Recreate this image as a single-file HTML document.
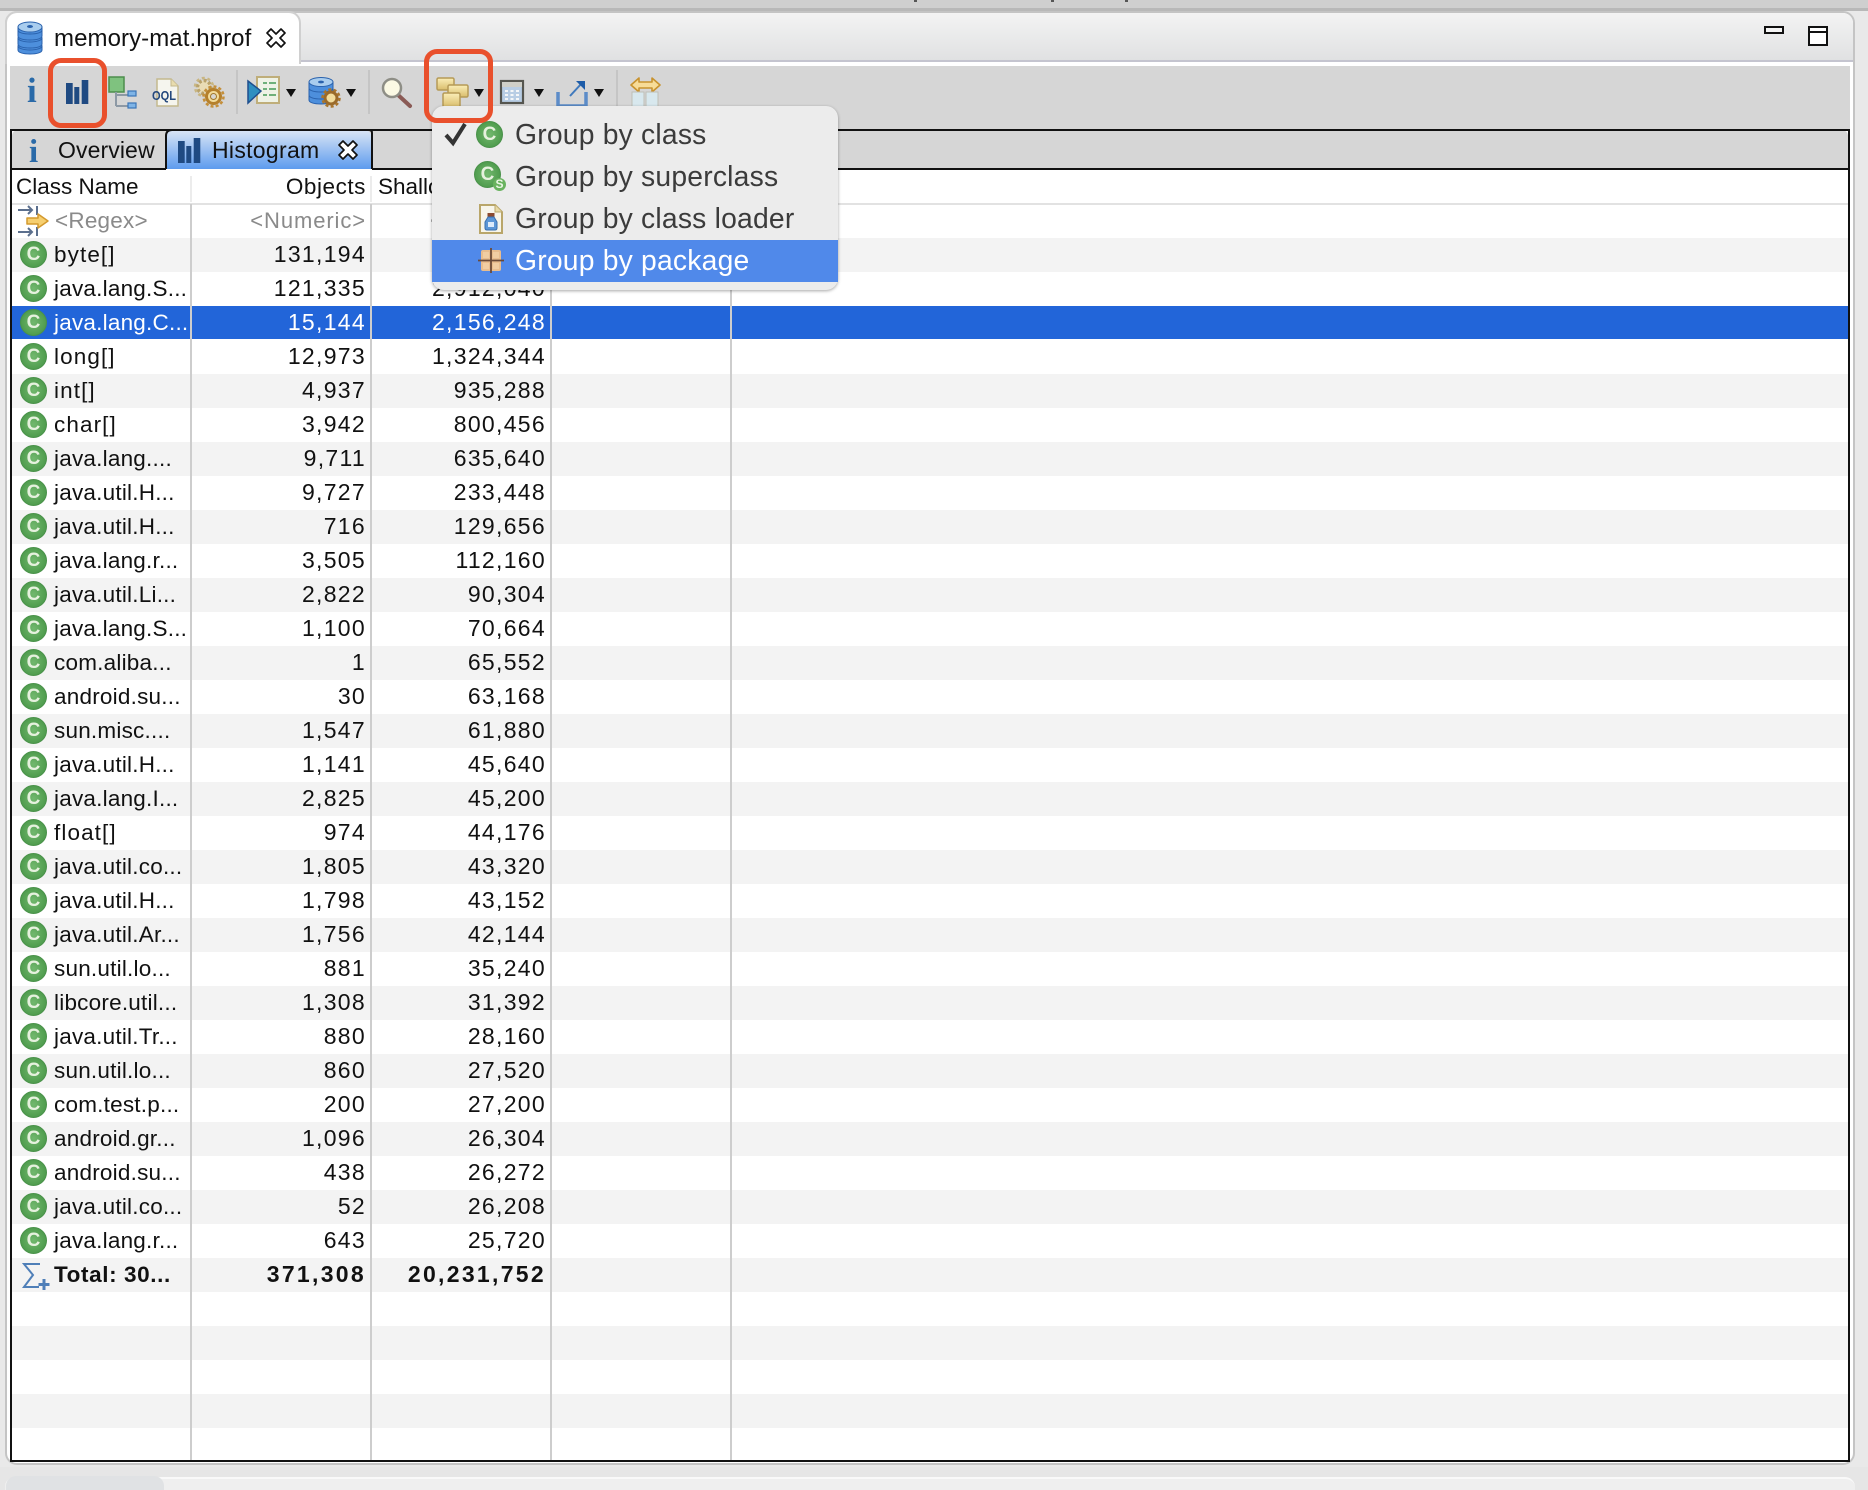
<!DOCTYPE html>
<html><head><meta charset="utf-8"><title>memory-mat.hprof</title>
<style>
html,body{margin:0;padding:0;background:#e9e9e9;}
#p{position:relative;width:1868px;height:1490px;overflow:hidden;background:#e9e9e9;font-family:"Liberation Sans",sans-serif;color:#111;filter:blur(.3px);}
.a{position:absolute;}
.r{position:absolute;left:11px;width:1838px;height:34px;line-height:33px;font-size:22.5px;white-space:nowrap;}
.r.e{background:#f3f3f3;}
.r.sel{background:#2265d9;color:#fff;height:33px;}
.n{position:absolute;left:43px;top:0;letter-spacing:.22px;}
.b{letter-spacing:1.1px;}
.o,.s{position:absolute;top:0;width:175px;text-align:right;letter-spacing:1.3px;font-size:23px;}
.o{left:180px;}
.s{left:360px;}
.t .o,.t .s{letter-spacing:2.3px;}
.c{position:absolute;left:9px;top:3px;width:25px;height:25px;border-radius:50%;background:radial-gradient(circle,#72b86e 0,#55a153 60%,#3f8f42 100%);border:.5px solid #4a924a;color:#e6f1de;font:bold 19px/25px "Liberation Sans",sans-serif;text-align:center;}
.vl{position:absolute;top:204px;height:1256px;width:2px;background:#cdcdcd;z-index:2;}
.caret{position:absolute;width:0;height:0;border-left:5.5px solid transparent;border-right:5.5px solid transparent;border-top:8px solid #111;}
.sep{position:absolute;top:70px;height:44px;width:2px;background:#c5c5c5;}
.red{position:absolute;border:5px solid #e9502c;border-radius:13px;box-sizing:border-box;z-index:20;}
.mi{position:absolute;left:515px;font-size:28.3px;line-height:42px;color:#3b3b3b;white-space:nowrap;z-index:11;letter-spacing:.2px;}
svg{position:absolute;overflow:visible;}
.tick{position:absolute;top:0;width:3px;height:2px;background:#555;}
</style></head><body><div id="p">

<!-- top band -->
<div class="a" style="left:0;top:0;width:1868px;height:9px;background:#cfcfcf;"></div>
<div class="a" style="left:0;top:8px;width:1868px;height:3px;background:#b8b8b8;"></div>
<div class="tick" style="left:914px;"></div><div class="tick" style="left:1051px;"></div><div class="tick" style="left:1125px;"></div>

<!-- main folder -->
<div class="a" style="left:5px;top:11px;width:1850px;height:1454px;box-sizing:border-box;border:2px solid #c4c4c4;border-radius:12px;background:#fff;"></div>
<div class="a" style="left:7px;top:13px;width:1846px;height:47px;background:linear-gradient(#f3f3f3,#e0e1e2);border-radius:10px 10px 0 0;"></div>
<div class="a" style="left:300px;top:60px;width:1553px;height:2px;background:#c4c4cf;"></div>
<!-- editor tab -->
<div class="a" style="left:5px;top:11px;width:296px;height:53px;box-sizing:border-box;border:2px solid #d0d0d0;border-bottom:none;border-radius:12px 12px 0 0;background:#fff;"></div>
<svg style="left:17px;top:21px" width="26" height="34" viewBox="0 0 26 34">
<g fill="#4d8fdc" stroke="#2a62ad" stroke-width="1"><path d="M1 25v4c0 2.500 5 4 12 4s12-1.500 12-4v-4z"/><ellipse cx="13" cy="25" rx="12" ry="4"/><path d="M1 17v6c0 2.500 5 4 12 4s12-1.500 12-4v-6z"/><ellipse cx="13" cy="17" rx="12" ry="4"/><path d="M1 9v6c0 2.500 5 4 12 4s12-1.500 12-4v-6z"/><path d="M1 6v3c0 2.500 5 4 12 4s12-1.500 12-4v-3z"/></g>
<ellipse cx="13" cy="6" rx="12" ry="5" fill="#a9cdee" stroke="#2a62ad"/><ellipse cx="13" cy="5.500" rx="3" ry="1.500" fill="#2a62ad"/></svg>
<div class="a" style="left:54px;top:23px;font-size:24px;line-height:32px;color:#111;white-space:nowrap;letter-spacing:.08px;">memory-mat.hprof</div>
<svg style="left:266px;top:28px" width="20" height="20" viewBox="0 0 20 20"><path d="M1 5 5 1l5 5 5-5 4 4-5 5 5 5-4 4-5-5-5 5-4-4 5-5z" fill="#fff" stroke="#111" stroke-width="1.700" stroke-linejoin="round"/></svg>
<!-- window buttons -->
<div class="a" style="left:1764px;top:26px;width:20px;height:8px;box-sizing:border-box;border:2px solid #111;background:#f4f4f4;"></div>
<div class="a" style="left:1808px;top:26px;width:20px;height:20px;box-sizing:border-box;border:2px solid #111;background:#fff;"><div style="height:3px;border-bottom:2px solid #111;"></div></div>

<!-- toolbar -->
<div class="a" style="left:10px;top:66px;width:1840px;height:64px;background:#d6d6d6;"></div>
<div class="a" style="left:27px;top:69px;font:bold 35px/44px 'Liberation Serif',serif;color:#2a6aa8;">i</div>
<svg style="left:66px;top:80px" width="23" height="25"><path d="M0 3h6.700v21H0zM8.300 7h5v17h-5zM15.700 0h6.600v24h-6.600z" fill="#1f4a82"/></svg>
<svg style="left:108px;top:76px" width="30" height="32"><rect x="1" y="1" width="15" height="15" fill="#7fc27f" stroke="#4d8d4d" stroke-width="1.500"/><path d="M8 16v14M8 19h12M8 30h12" stroke="#8d99a5" stroke-width="2" fill="none"/><rect x="20" y="15" width="8" height="5" fill="#7fb4e6" stroke="#3a75b8" stroke-width="1.200"/><rect x="20" y="27" width="8" height="5" fill="#7fb4e6" stroke="#3a75b8" stroke-width="1.200"/></svg>
<svg style="left:152px;top:78px" width="28" height="30"><path d="M5 1h14l7 7v20H5z" fill="#f5f5ee" stroke="#c4b98e" stroke-width="1.500"/><path d="M19 1v7h7" fill="#e8dcae" stroke="#c4b98e"/><text x="0" y="22" font-family="Liberation Sans" font-weight="bold" font-size="13" fill="#24487c" textLength="24" lengthAdjust="spacingAndGlyphs">OQL</text></svg>
<svg style="left:193px;top:76px" width="32" height="32"><circle cx="11" cy="11" r="6.500" fill="#e9dcb5" stroke="#b8a26c" stroke-width="3.500" stroke-dasharray="3 2"/><circle cx="11" cy="11" r="9" fill="none" stroke="#c9b682" stroke-width="2.500" stroke-dasharray="3 2.700"/><circle cx="20.500" cy="20.500" r="7" fill="#f2dc9c" stroke="#b5802c" stroke-width="3"/><circle cx="20.500" cy="20.500" r="10" fill="none" stroke="#c48f3a" stroke-width="2.500" stroke-dasharray="3 2.200"/><circle cx="20.500" cy="20.500" r="3" fill="#d8d6d0" stroke="#a0782e"/></svg>
<div class="sep" style="left:236px;"></div>
<svg style="left:247px;top:76px" width="34" height="30"><rect x="10" y="1" width="22" height="26" fill="#eef2e6" stroke="#bfae7a" stroke-width="2"/><path d="M16 7h4M22 7h7M16 13h4M22 13h7M16 19h4M22 19h7" stroke="#6fb07a" stroke-width="2"/><path d="M1 5 14 15 1 27z" fill="#2e8fc0" stroke="#1e4f8e" stroke-width="1.500"/></svg>
<div class="caret" style="left:286px;top:89px;"></div>
<svg style="left:308px;top:77px" width="34" height="31"><g fill="#4d8fdc" stroke="#2a62ad"><path d="M1 19v4c0 2.500 5 4 12 4s12-1.500 12-4v-4z"/><path d="M1 12v6c0 2.500 5 4 12 4s12-1.500 12-4v-6z"/><path d="M1 5v6c0 2.500 5 4 12 4s12-1.500 12-4V5z"/></g><ellipse cx="13" cy="5" rx="12" ry="4.500" fill="#a9cdee" stroke="#2a62ad"/><ellipse cx="13" cy="5" rx="3" ry="1.400" fill="#2a62ad"/><circle cx="23" cy="21" r="6" fill="#f2dc9c" stroke="#9a6a2a" stroke-width="3"/><circle cx="23" cy="21" r="8.500" fill="none" stroke="#a9752c" stroke-width="2.500" stroke-dasharray="3 2.300"/></svg>
<div class="caret" style="left:346px;top:89px;"></div>
<div class="sep" style="left:368px;"></div>
<svg style="left:381px;top:78px" width="31" height="30"><path d="M16 16 29 28" stroke="#8a5a55" stroke-width="4" stroke-linecap="round"/><circle cx="11" cy="10" r="9" fill="#fbf9e4" stroke="#8e8e86" stroke-width="2.500"/></svg>
<svg style="left:436px;top:77px" width="33" height="31"><defs><linearGradient id="tan" x1="0" y1="0" x2="0" y2="1"><stop offset="0" stop-color="#fbeeb8"/><stop offset="1" stop-color="#d9bd6c"/></linearGradient></defs><rect x="1" y="1" width="17" height="12" rx="1.500" fill="url(#tan)" stroke="#b59a56" stroke-width="1.500"/><rect x="12" y="8" width="20" height="12" rx="1.500" fill="url(#tan)" stroke="#b59a56" stroke-width="1.500"/><rect x="7" y="16" width="17" height="14" rx="1.500" fill="url(#tan)" stroke="#b59a56" stroke-width="1.500"/></svg>
<div class="caret" style="left:474px;top:89px;"></div>
<svg style="left:500px;top:80px" width="25" height="25"><rect x="1" y="1" width="22" height="22" fill="#b8cde4" stroke="#55554f" stroke-width="2.200"/><rect x="2" y="2" width="20" height="5" fill="#cfcfc8"/><path d="M5 11h3M10.500 11h3M16 11h3M5 15h3M10.500 15h3M16 15h3M5 19h3M10.500 19h3M16 19h3" stroke="#f4f6f8" stroke-width="2"/></svg>
<div class="caret" style="left:534px;top:89px;"></div>
<svg style="left:556px;top:79px" width="33" height="30"><path d="M2 13v14h28V13" fill="none" stroke="#5c8cc8" stroke-width="3.500"/><path d="M14 17 26 4" stroke="#3f79bd" stroke-width="2"/><path d="M20 2h9v9z" fill="#1d5ca8"/></svg>
<div class="caret" style="left:594px;top:89px;"></div>
<div class="sep" style="left:616px;"></div>
<svg style="left:630px;top:76px" width="31" height="32"><path d="M1 9 9 2v4h13V2l8 7-8 7v-4H9v4z" fill="#f7dc98" stroke="#c8932f" stroke-width="1.600" stroke-linejoin="round"/><rect x="2" y="16" width="12" height="15" fill="#d8e8ee" stroke="#bfbfb6"/><rect x="16" y="16" width="12" height="15" fill="#d8e8ee" stroke="#bfbfb6"/></svg>

<!-- inner folder -->
<div class="a" style="left:11px;top:129px;width:1838px;height:1332px;background:#fff;"></div>
<div class="a" style="left:12px;top:130px;width:1836px;height:39px;background:#d6d6d6;border-radius:6px 6px 0 0;"></div>
<div class="a" style="left:165px;top:130px;width:207px;height:39px;background:linear-gradient(#dbe6f5,#5d9bee);border-radius:8px 8px 0 0;"></div>
<svg style="left:165px;top:128px;" width="208" height="44"><path d="M1 41V8q0-6 6-6h197q3 0 3 3v36" fill="none" stroke="#111" stroke-width="2"/></svg>
<div class="a" style="left:10px;top:129px;width:1840px;height:2px;box-sizing:border-box;border-top:2px solid #111;border-radius:8px 8px 0 0;"></div>
<div class="a" style="left:10px;top:168px;width:156px;height:2px;background:#111;"></div>
<div class="a" style="left:372px;top:168px;width:1478px;height:2px;background:#111;"></div>
<div class="a" style="left:29px;top:133px;font:bold 33px/38px 'Liberation Serif',serif;color:#2a6aa8;">i</div>
<div class="a" style="left:58px;top:133px;font-size:23px;line-height:34px;white-space:nowrap;letter-spacing:.1px;">Overview</div>
<svg style="left:178px;top:138px" width="23" height="25"><path d="M0 3h6.700v22H0zM8.300 8h5v17h-5zM15.700 0h6.600v25h-6.600z" fill="#1f4a82"/></svg>
<div class="a" style="left:212px;top:133px;font-size:23px;line-height:34px;white-space:nowrap;letter-spacing:.3px;">Histogram</div>
<svg style="left:338px;top:140px" width="20" height="20" viewBox="0 0 20 20"><path d="M1 5 5 1l5 5 5-5 4 4-5 5 5 5-4 4-5-5-5 5-4-4 5-5z" fill="#fff" stroke="#111" stroke-width="1.700" stroke-linejoin="round"/></svg>

<!-- table header -->
<div class="a" style="left:16px;top:170px;font-size:22.5px;line-height:33px;white-space:nowrap;">Class Name</div>
<div class="a" style="left:191px;top:170px;width:175px;text-align:right;font-size:22.500px;line-height:33px;letter-spacing:.55px;">Objects</div>
<div class="a" style="left:378px;top:170px;font-size:22.5px;line-height:33px;white-space:nowrap;">Shallow Heap</div>
<div class="a" style="left:11px;top:203px;width:1838px;height:1.500px;background:#e2e2e2;"></div>
<div class="a" style="left:190px;top:176px;width:2px;height:26px;background:#ececec;"></div>
<div class="a" style="left:370px;top:176px;width:2px;height:26px;background:#ececec;"></div>

<!-- filter row -->
<div class="r" style="top:204px;color:#8a8a8a;"><div class="n" style="left:44px;font-size:22.5px;">&lt;Regex&gt;</div><div class="o" style="letter-spacing:.9px;font-size:22px;">&lt;Numeric&gt;</div><div class="s" style="letter-spacing:.9px;font-size:22px;">&lt;Numeric&gt;</div></div>
<svg style="left:17px;top:206px" width="34" height="30"><path d="M1 4h14M11 0l4 4-4 4M20 0v9M1 26h14M11 22l4 4-4 4M20 21v9" stroke="#5b6f8d" stroke-width="2" fill="none"/><path d="M10 12h11V8l10 7-10 7v-4H10z" fill="#f6cf70" stroke="#d49a2e" stroke-width="1.500" stroke-linejoin="round"/></svg>

<!-- rows -->
<div class="r e" style="top:238px"><span class="c">C</span><div class="n b">byte[]</div><div class="o">131,194</div></div>
<div class="r" style="top:272px"><span class="c">C</span><div class="n">java.lang.S...</div><div class="o">121,335</div><div class="s">2,912,040</div></div>
<div class="r sel" style="top:306px"><span class="c">C</span><div class="n">java.lang.C...</div><div class="o">15,144</div><div class="s">2,156,248</div></div>
<div class="r" style="top:340px"><span class="c">C</span><div class="n b">long[]</div><div class="o">12,973</div><div class="s">1,324,344</div></div>
<div class="r e" style="top:374px"><span class="c">C</span><div class="n b">int[]</div><div class="o">4,937</div><div class="s">935,288</div></div>
<div class="r" style="top:408px"><span class="c">C</span><div class="n b">char[]</div><div class="o">3,942</div><div class="s">800,456</div></div>
<div class="r e" style="top:442px"><span class="c">C</span><div class="n">java.lang....</div><div class="o">9,711</div><div class="s">635,640</div></div>
<div class="r" style="top:476px"><span class="c">C</span><div class="n">java.util.H...</div><div class="o">9,727</div><div class="s">233,448</div></div>
<div class="r e" style="top:510px"><span class="c">C</span><div class="n">java.util.H...</div><div class="o">716</div><div class="s">129,656</div></div>
<div class="r" style="top:544px"><span class="c">C</span><div class="n">java.lang.r...</div><div class="o">3,505</div><div class="s">112,160</div></div>
<div class="r e" style="top:578px"><span class="c">C</span><div class="n">java.util.Li...</div><div class="o">2,822</div><div class="s">90,304</div></div>
<div class="r" style="top:612px"><span class="c">C</span><div class="n">java.lang.S...</div><div class="o">1,100</div><div class="s">70,664</div></div>
<div class="r e" style="top:646px"><span class="c">C</span><div class="n">com.aliba...</div><div class="o">1</div><div class="s">65,552</div></div>
<div class="r" style="top:680px"><span class="c">C</span><div class="n">android.su...</div><div class="o">30</div><div class="s">63,168</div></div>
<div class="r e" style="top:714px"><span class="c">C</span><div class="n">sun.misc....</div><div class="o">1,547</div><div class="s">61,880</div></div>
<div class="r" style="top:748px"><span class="c">C</span><div class="n">java.util.H...</div><div class="o">1,141</div><div class="s">45,640</div></div>
<div class="r e" style="top:782px"><span class="c">C</span><div class="n">java.lang.I...</div><div class="o">2,825</div><div class="s">45,200</div></div>
<div class="r" style="top:816px"><span class="c">C</span><div class="n b">float[]</div><div class="o">974</div><div class="s">44,176</div></div>
<div class="r e" style="top:850px"><span class="c">C</span><div class="n">java.util.co...</div><div class="o">1,805</div><div class="s">43,320</div></div>
<div class="r" style="top:884px"><span class="c">C</span><div class="n">java.util.H...</div><div class="o">1,798</div><div class="s">43,152</div></div>
<div class="r e" style="top:918px"><span class="c">C</span><div class="n">java.util.Ar...</div><div class="o">1,756</div><div class="s">42,144</div></div>
<div class="r" style="top:952px"><span class="c">C</span><div class="n">sun.util.lo...</div><div class="o">881</div><div class="s">35,240</div></div>
<div class="r e" style="top:986px"><span class="c">C</span><div class="n">libcore.util...</div><div class="o">1,308</div><div class="s">31,392</div></div>
<div class="r" style="top:1020px"><span class="c">C</span><div class="n">java.util.Tr...</div><div class="o">880</div><div class="s">28,160</div></div>
<div class="r e" style="top:1054px"><span class="c">C</span><div class="n">sun.util.lo...</div><div class="o">860</div><div class="s">27,520</div></div>
<div class="r" style="top:1088px"><span class="c">C</span><div class="n">com.test.p...</div><div class="o">200</div><div class="s">27,200</div></div>
<div class="r e" style="top:1122px"><span class="c">C</span><div class="n">android.gr...</div><div class="o">1,096</div><div class="s">26,304</div></div>
<div class="r" style="top:1156px"><span class="c">C</span><div class="n">android.su...</div><div class="o">438</div><div class="s">26,272</div></div>
<div class="r e" style="top:1190px"><span class="c">C</span><div class="n">java.util.co...</div><div class="o">52</div><div class="s">26,208</div></div>
<div class="r" style="top:1224px"><span class="c">C</span><div class="n">java.lang.r...</div><div class="o">643</div><div class="s">25,720</div></div>
<div class="r e t" style="top:1258px;font-weight:bold;"><div class="n" style="letter-spacing:.6px;">Total: 30...</div><div class="o">371,308</div><div class="s">20,231,752</div></div>
<svg style="left:22px;top:1262px" width="28" height="30"><path d="M18 2H2l9 11-9 12h15" fill="none" stroke="#4f7fb8" stroke-width="2"/><path d="M22 17v11M16.500 22.500h11" stroke="#4f7fb8" stroke-width="3"/></svg>
<div class="r" style="top:1292px"></div>
<div class="r e" style="top:1326px"></div>
<div class="r" style="top:1360px"></div>
<div class="r e" style="top:1394px"></div>
<div class="r" style="top:1428px;height:32px;"></div>

<!-- column lines -->
<div class="vl" style="left:190px"></div>
<div class="vl" style="left:370px"></div>
<div class="vl" style="left:550px"></div>
<div class="vl" style="left:730px"></div>

<!-- table borders -->
<div class="a" style="left:10px;top:129px;width:2px;height:1333px;background:#111;z-index:3;"></div>
<div class="a" style="left:1848px;top:129px;width:2px;height:1333px;background:#111;z-index:3;"></div>
<div class="a" style="left:10px;top:1460px;width:1840px;height:2px;background:#111;z-index:3;"></div>

<!-- bottom bar -->
<div class="a" style="left:0;top:1467px;width:1868px;height:23px;background:#e6e6e6;"></div>
<div class="a" style="left:5px;top:1477px;width:1850px;height:13px;background:#efefef;border-top:2px solid #f9f9f9;border-radius:10px 10px 0 0;box-sizing:border-box;"></div>
<div class="a" style="left:6px;top:1476px;width:158px;height:14px;background:#e0e2e4;border-radius:10px 10px 0 0;"></div>

<!-- menu -->
<div class="a" style="left:432px;top:106px;width:406px;height:184px;background:#ececec;border-radius:12px;box-shadow:0 1px 3px rgba(0,0,0,.35);z-index:10;"></div>
<div class="a" style="left:432px;top:240px;width:406px;height:42px;background:#5089ea;z-index:10;"></div>
<svg style="left:444px;top:122px;z-index:11" width="24" height="24"><path d="M2 13l7 8L21 2" fill="none" stroke="#333" stroke-width="4"/></svg>
<span class="c" style="left:476px;top:121px;z-index:11;">C</span>
<div class="mi" style="top:113px;">Group by class</div>
<span class="c" style="left:474px;top:161px;z-index:11;">C</span>
<span style="position:absolute;left:493px;top:178px;width:13px;height:13px;border-radius:50%;background:#69b35f;color:#eaf6e4;font:bold 12px/13px 'Liberation Sans',sans-serif;text-align:center;z-index:12;">S</span>
<div class="mi" style="top:155px;">Group by superclass</div>
<svg style="left:479px;top:204px;z-index:11" width="24" height="30"><path d="M1 1h15l7 7v21H1z" fill="#f7f5ea" stroke="#b9a66a" stroke-width="2"/><path d="M16 1v7h7" fill="#e8d9a5" stroke="#b9a66a"/><rect x="8.500" y="9" width="7" height="4" fill="#8a4a30"/><path d="M9 13h6l3 5v6q0 2-2 2H8q-2 0-2-2v-6z" fill="#5c97d6" stroke="#3a6fae"/><path d="M9 18h6v5H9z" fill="#dcebfa"/></svg>
<div class="mi" style="top:197px;">Group by class loader</div>
<svg style="left:478px;top:248px;z-index:11" width="26" height="26"><rect x="3" y="2" width="20" height="21" rx="2" fill="#e9bd8e"/><path d="M13 0v25M0 12.500h26" stroke="#6b4a38" stroke-width="1.800"/><path d="M5 4h6v6H5zM15 4h6v6h-6zM5 15h6v6H5zM15 15h6v6h-6z" fill="#f1cda2"/></svg>
<div class="mi" style="top:239px;color:#fff;">Group by package</div>

<!-- red highlights -->
<div class="red" style="left:48px;top:58px;width:59px;height:70px;"></div>
<div class="red" style="left:424px;top:49px;width:69px;height:74px;"></div>

</div></body></html>
